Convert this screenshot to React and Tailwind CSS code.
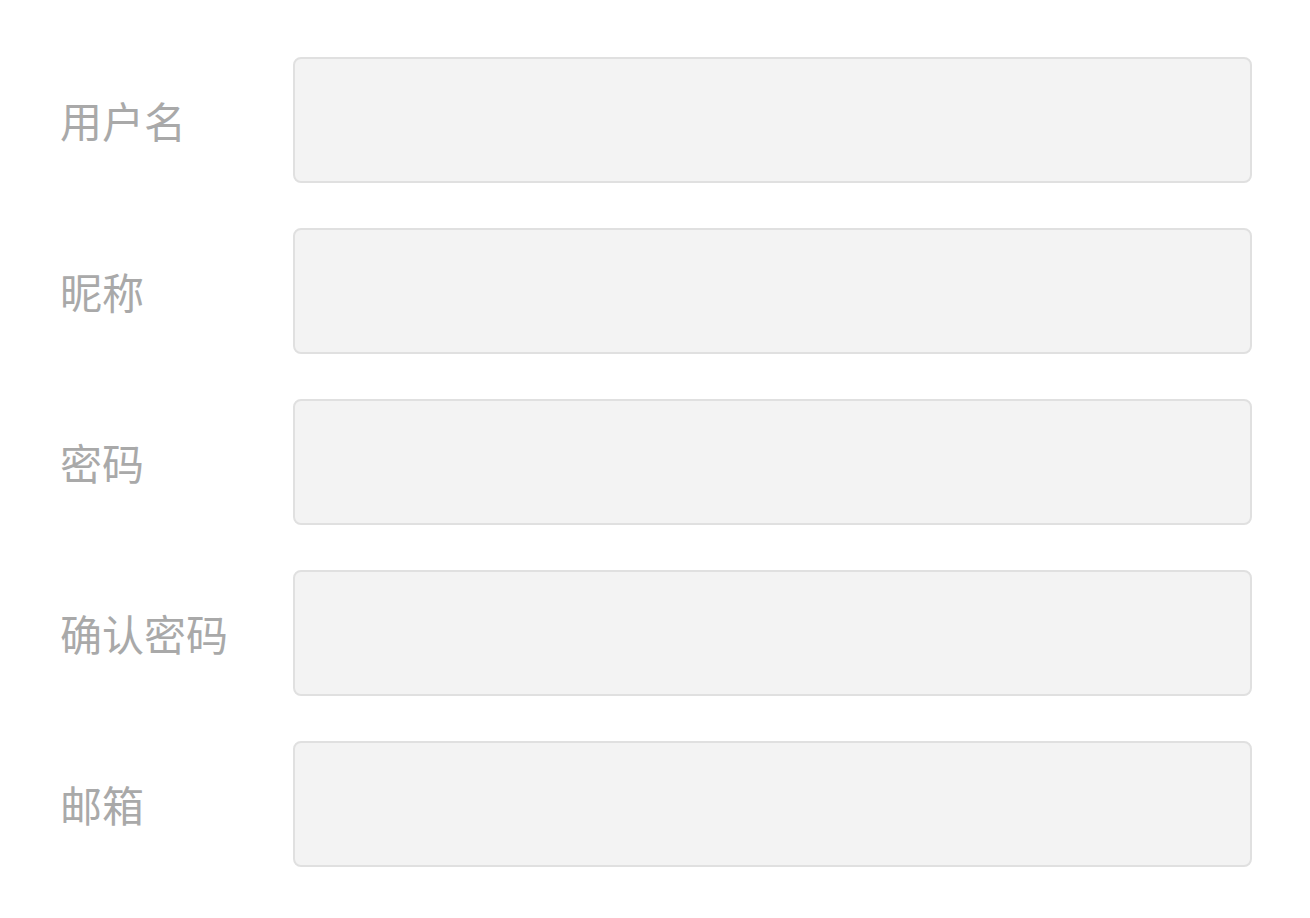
const FIELDS = [
  { label: "用户名", type: "text" },
  { label: "昵称", type: "text" },
  { label: "密码", type: "password" },
  { label: "确认密码", type: "password" },
  { label: "邮箱", type: "email" },
];

export default function App() {
  return (
    <div
      className="min-h-screen bg-white pt-[57px] pl-[60px]"
      style={{ fontFamily: '"Noto Sans CJK SC", "Noto Sans", sans-serif' }}
    >
      <form className="flex flex-col gap-[45px]">
        {FIELDS.map((f, i) => (
          <div className="flex items-center" key={i}>
            <label className="w-[233px] shrink-0 text-[42px] leading-none text-[#a9a9a9]">
              {f.label}
            </label>
            <input
              type={f.type}
              className="w-[959px] h-[126px] rounded-[8px] border-2 border-[#e0e0e0] bg-[#f3f3f3] outline-none px-4 text-[36px]"
            />
          </div>
        ))}
      </form>
    </div>
  );
}
